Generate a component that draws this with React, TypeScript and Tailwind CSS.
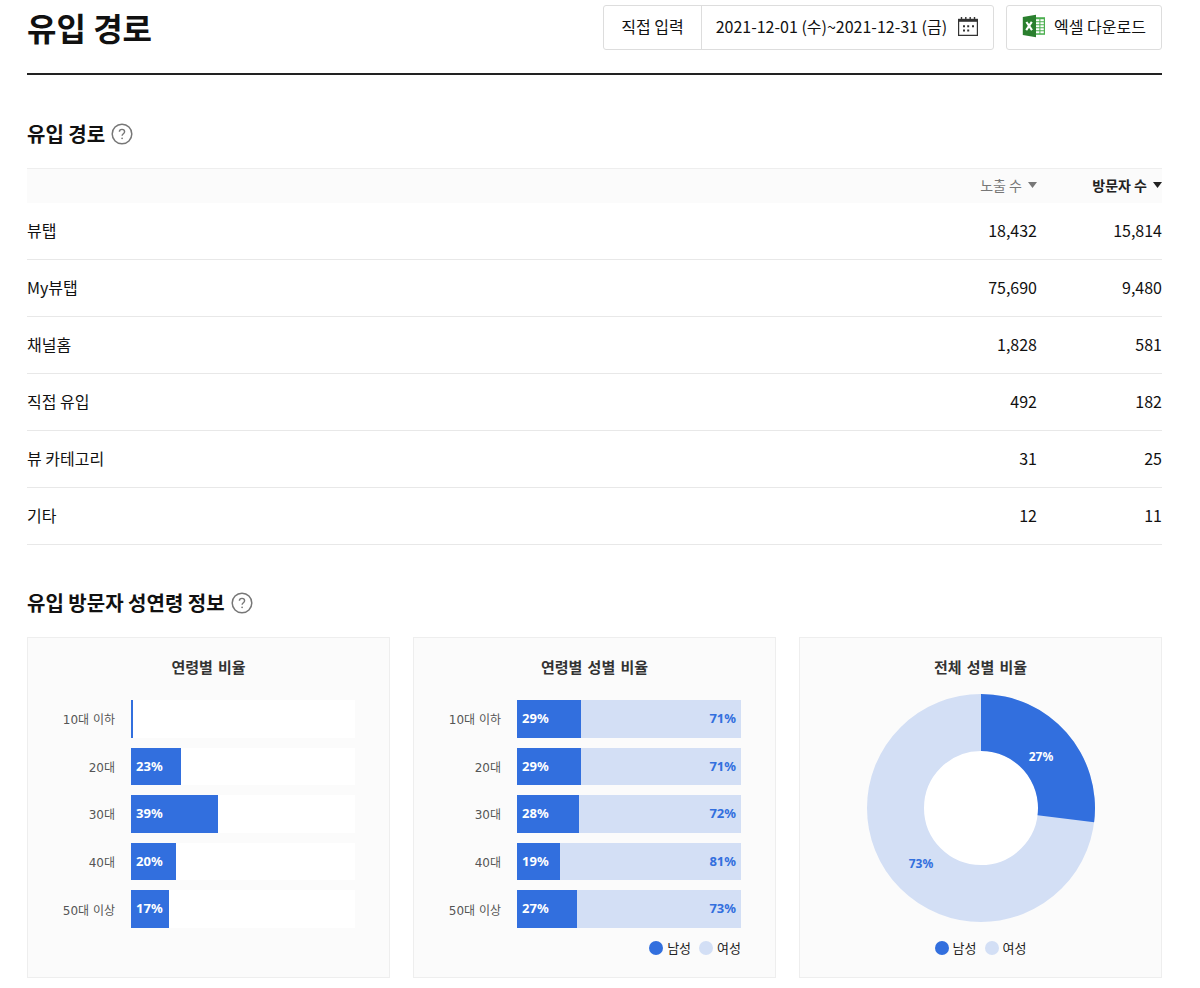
import type { ReactNode } from 'react';
import { clsx } from 'clsx';

const channels = [
  { name: '뷰탭', impressions: 18432, visitors: 15814 },
  { name: 'My뷰탭', impressions: 75690, visitors: 9480 },
  { name: '채널홈', impressions: 1828, visitors: 581 },
  { name: '직접 유입', impressions: 492, visitors: 182 },
  { name: '뷰 카테고리', impressions: 31, visitors: 25 },
  { name: '기타', impressions: 12, visitors: 11 }
];

const ages = [
  { label: '10대 이하', share: 0.7, male: 28.5 },
  { label: '20대', share: 22.5, male: 28.5 },
  { label: '30대', share: 38.7, male: 27.6 },
  { label: '40대', share: 19.9, male: 19 },
  { label: '50대 이상', share: 16.9, male: 26.6 }
];

const maleTotal = 27;

function HelpButton({ label }: { label: string }) {
  return (
    <button type="button" aria-label={label} className="text-[#777]">
      <svg width="22" height="22" viewBox="0 0 22 22" fill="none" stroke="currentColor" aria-hidden>
        <circle cx="11" cy="11" r="9.8" strokeWidth="1.5" />
        <path d="M8.4 8.8c0-1.5 1.1-2.4 2.6-2.4s2.6.9 2.6 2.3c0 1.9-2.5 2.1-2.5 4.1" strokeWidth="1.4" />
        <circle cx="11.1" cy="15.3" r=".9" fill="currentColor" stroke="none" />
      </svg>
    </button>
  );
}

function CalendarIcon() {
  return (
    <svg width="22" height="22" viewBox="0 0 22 22" aria-hidden>
      <path d="M1.6 4.5h18.8v15.9H1.6z" fill="none" stroke="#333" strokeWidth="1.2" />
      <path d="M1 3.8h20v3H1z" fill="#333" />
      <path d="M4.5 2v2M8.8 2v2M13.2 2v2M17.5 2v2" stroke="#333" strokeWidth="1.4" />
      <path d="M6 10.2h2v2H6zM10.2 10.2h2v2h-2zM15 10.2h2v2h-2zM6 14.6h2v2H6zM10.2 14.6h2v2h-2z" fill="#333" />
    </svg>
  );
}

function ExcelIcon() {
  return (
    <svg width="24" height="24" viewBox="0 0 24 24" aria-hidden>
      <path d="M13 3.2h10v17.6H13z" fill="#4caf50" />
      <path d="M14 5.2h3.4v2H14zM18.4 5.2h3.4v2h-3.4zM14 8.2h3.4v2H14zM18.4 8.2h3.4v2h-3.4zM14 11.2h3.4v2H14zM18.4 11.2h3.4v2h-3.4zM14 14.2h3.4v2H14zM18.4 14.2h3.4v2h-3.4zM14 17.2h3.4v2H14zM18.4 17.2h3.4v2h-3.4z" fill="#fff" />
      <path d="M.8 3 14 .8v22.4L.8 21z" fill="#2a7f2e" />
      <path d="m4.4 8 5.6 8.2M9.8 7.8l-5.6 8.4" stroke="#fff" strokeWidth="2.1" />
    </svg>
  );
}

function SortButton({ label, active }: { label: string; active?: boolean }) {
  return (
    <button
      type="button"
      className={clsx(
        'ml-auto flex items-center gap-1.5 pb-0.5 text-sm',
        active ? 'font-bold text-[#222]' : 'font-normal text-[#777]'
      )}
    >
      {label}
      <svg width="9" height="6" viewBox="0 0 9 6" fill="currentColor" aria-hidden>
        <path d="M0 0h9L4.5 6z" />
      </svg>
    </button>
  );
}

function SectionTitle({ children, help }: { children: ReactNode; help: string }) {
  return (
    <div className="mb-5 flex h-7 items-center gap-1.5">
      <h2 className="text-xl font-bold">{children}</h2>
      <HelpButton label={help} />
    </div>
  );
}

function Card({ title, children }: { title: string; children: ReactNode }) {
  return (
    <article className="border border-[#eee] bg-[#fbfbfb] px-[34px] pt-[18px] pb-[19px]">
      <h3 className="text-center font-['DejaVu_Sans','Noto_Sans_CJK_KR',sans-serif] text-[15px] leading-6 font-bold text-[#333]">
        {title}
      </h3>
      {children}
    </article>
  );
}

function Legend({ className }: { className: string }) {
  return (
    <ul className={clsx('flex h-5 items-center gap-2 text-[13px] text-[#222]', className)}>
      <li className="flex items-center gap-1">
        <span className="size-3.5 rounded-full bg-[#326fde]" />
        남성
      </li>
      <li className="flex items-center gap-1">
        <span className="size-3.5 rounded-full bg-[#d3dff5]" />
        여성
      </li>
    </ul>
  );
}

function AgeRow({ label, children }: { label: string; children: ReactNode }) {
  return (
    <li className="flex flex-1 gap-4">
      <span className="flex w-[53px] items-center justify-end pt-[3px] font-['DejaVu_Sans','Noto_Sans_CJK_KR',sans-serif] text-xs whitespace-nowrap text-[#555]">
        {label}
      </span>
      <div className="flex flex-1 font-['Noto_Sans',sans-serif] text-[13px] font-bold">{children}</div>
    </li>
  );
}

function Donut({ percent }: { percent: number }) {
  const angle = (percent / 100) * Math.PI * 2;
  const x = Math.sin(angle);
  const y = -Math.cos(angle);
  const slice = `M0 -114A114 114 0 0 1 ${x * 114} ${y * 114}L${x * 57} ${y * 57}A57 57 0 0 0 0 -57Z`;

  return (
    <svg
      className="mx-auto mt-3.5 size-[228px] font-['Noto_Sans',sans-serif] text-xs font-bold"
      viewBox="-114 -114 228 228"
      role="img"
      aria-label="전체 성별 비율"
    >
      <circle r="85.5" fill="#fff" stroke="#d3dff5" strokeWidth="57" />
      <path d={slice} fill="#326fde" />
      <g textAnchor="middle">
        <text x="60" y="-47" fill="#fff">{percent}%</text>
        <text x="-60" y="60" fill="#326fde">{100 - percent}%</text>
      </g>
    </svg>
  );
}

export default function App() {
  return (
    <main className="pt-[5px] pr-[38px] pb-2.5 pl-[27px] font-['Noto_Sans_CJK_KR',sans-serif] text-[#111]">
      <header className="flex items-center justify-between border-b-2 border-[#222] pb-[23px]">
        <h1 className="text-[32px] leading-[45px] font-bold">유입 경로</h1>
        <div className="flex h-[45px] gap-3 text-base">
          <div className="flex rounded-[3px] border border-[#ddd]">
            <button type="button" className="border-r border-[#ddd] px-[17px] pb-[3px]">직접 입력</button>
            <button type="button" className="flex items-center gap-2.5 px-3.5 pb-[3px]">
              2021-12-01 (수)~2021-12-31 (금)
              <CalendarIcon />
            </button>
          </div>
          <button type="button" className="flex items-center gap-2 rounded-[3px] border border-[#ddd] px-[15px] pb-[3px]">
            <ExcelIcon />
            엑셀 다운로드
          </button>
        </div>
      </header>

      <section className="mt-[45px]">
        <SectionTitle help="유입 경로 도움말">유입 경로</SectionTitle>
        <table className="w-full text-base">
          <thead>
            <tr className="h-[34px] border-t border-[#eee] bg-[#fbfbfb]">
              <th aria-label="유입 경로" />
              <th className="w-[125px] p-0">
                <SortButton label="노출 수" />
              </th>
              <th className="w-[125px] p-0">
                <SortButton label="방문자 수" active />
              </th>
            </tr>
          </thead>
          <tbody>
            {channels.map((channel) => (
              <tr key={channel.name} className="h-[57px] border-b border-[#e8e8e8]">
                <td className="p-0 pb-0.5">{channel.name}</td>
                <td className="p-0 pb-0.5 text-right">{channel.impressions.toLocaleString('en-US')}</td>
                <td className="p-0 pb-0.5 text-right">{channel.visitors.toLocaleString('en-US')}</td>
              </tr>
            ))}
          </tbody>
        </table>
      </section>

      <section className="mt-11">
        <SectionTitle help="성연령 정보 도움말">유입 방문자 성연령 정보</SectionTitle>
        <div className="grid grid-cols-3 gap-[23px]">
          <Card title="연령별 비율">
            <ul className="mt-5 flex h-[228px] flex-col gap-2.5">
              {ages.map((age) => (
                <AgeRow key={age.label} label={age.label}>
                  <div className="flex-1 bg-white">
                    <div className="flex h-full items-center bg-[#326fde] text-white" style={{ width: `${age.share}%` }}>
                      {age.share >= 1 && <span className="pl-[5px]">{Math.round(age.share)}%</span>}
                    </div>
                  </div>
                </AgeRow>
              ))}
            </ul>
          </Card>

          <Card title="연령별 성별 비율">
            <ul className="mt-5 flex h-[228px] flex-col gap-2.5">
              {ages.map((age) => (
                <AgeRow key={age.label} label={age.label}>
                  <div className="flex items-center bg-[#326fde] pl-[5px] text-white" style={{ width: `${age.male}%` }}>
                    {Math.round(age.male)}%
                  </div>
                  <div className="flex flex-1 items-center justify-end bg-[#d3dff5] pr-[5px] text-[#326fde]">
                    {100 - Math.round(age.male)}%
                  </div>
                </AgeRow>
              ))}
            </ul>
            <Legend className="mt-2.5 justify-end" />
          </Card>

          <Card title="전체 성별 비율">
            <Donut percent={maleTotal} />
            <Legend className="mt-4 justify-center" />
          </Card>
        </div>
      </section>
    </main>
  );
}
